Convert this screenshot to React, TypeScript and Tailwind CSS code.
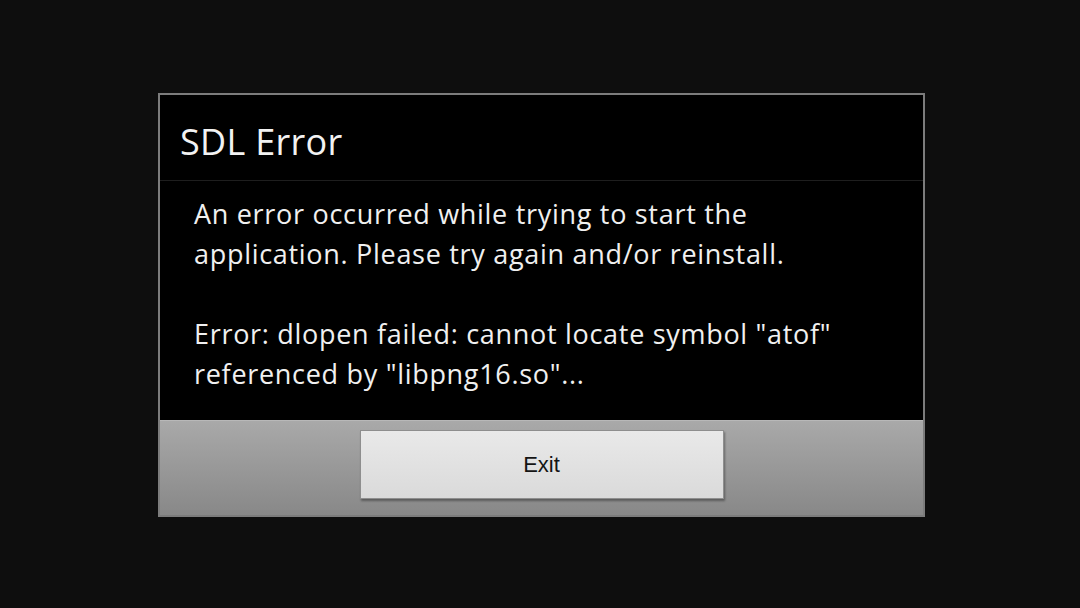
export default function App(): JSX.Element {
  return (
    <div className="flex h-[608px] w-[1080px] items-start bg-[#0e0e0e] font-['Open_Sans',sans-serif]">
      <ErrorDialog
        title="SDL Error"
        lines={[
          "An error occurred while trying to start the",
          "application. Please try again and/or reinstall.",
          "",
          'Error: dlopen failed: cannot locate symbol "atof"',
          'referenced by "libpng16.so"...',
        ]}
      />
    </div>
  );
}

function ErrorDialog(props: { title: string; lines: string[] }): JSX.Element {
  return (
    <div className="ml-[158px] mt-[93px] flex h-[424px] w-[767px] flex-col border-2 border-[#7c7c7c] bg-black">
      <div className="flex h-[86px] items-center border-b border-[#1e1e1e] pl-5 pt-[8px]">
        <span className="text-[36px] leading-none tracking-[0.3px] text-[#f2f2f2]">
          {props.title}
        </span>
      </div>
      <div className="flex-1 pl-[34px] pt-[13px] text-[27px] leading-[40px] tracking-[0.7px] text-[#f0f0f0]">
        {props.lines.map((line, i) => (
          <div key={i} className="h-[40px] whitespace-nowrap">
            {line}
          </div>
        ))}
      </div>
      <div className="flex h-[95px] justify-center border-t border-[#b8b8b8] bg-gradient-to-b from-[#a9a9a9] to-[#888888] pt-[9px]">
        <button className="flex h-[69px] w-[364px] items-center justify-center border border-[#8e8e8e] bg-gradient-to-b from-[#e9e9e9] to-[#dadada] font-['Liberation_Sans',sans-serif] text-[22px] text-[#141414] shadow-[1px_2px_2px_rgba(0,0,0,0.35)]">
          Exit
        </button>
      </div>
    </div>
  );
}
